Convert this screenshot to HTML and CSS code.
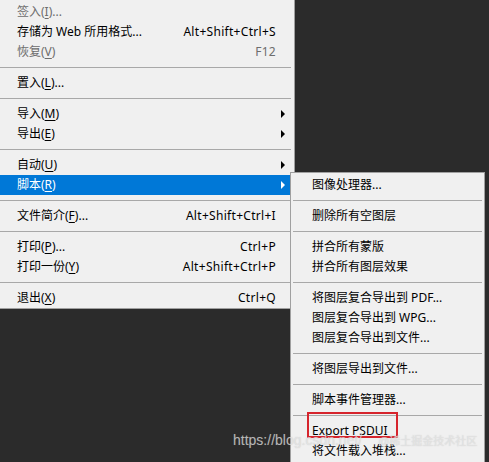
FILE: index.html
```html
<!DOCTYPE html>
<html lang="zh-CN">
<head>
<meta charset="utf-8">
<title>文件菜单</title>
<link rel="stylesheet" href="styles.css">
</head>
<body>
<div class="screen">
  <div class="menu main-menu">
    <div class="item disabled"><span class="label">签入(<u>I</u>)...</span></div>
    <div class="item"><span class="label">存储为 Web 所用格式...</span><span class="key">Alt+Shift+Ctrl+S</span></div>
    <div class="item disabled"><span class="label">恢复(<u>V</u>)</span><span class="key">F12</span></div>
    <div class="sep"></div>
    <div class="item"><span class="label">置入(<u>L</u>)...</span></div>
    <div class="sep"></div>
    <div class="item has-sub"><span class="label">导入(<u>M</u>)</span><span class="arrow"></span></div>
    <div class="item has-sub"><span class="label">导出(<u>E</u>)</span><span class="arrow"></span></div>
    <div class="sep"></div>
    <div class="item has-sub"><span class="label">自动(<u>U</u>)</span><span class="arrow"></span></div>
    <div class="item has-sub active"><span class="label">脚本(<u>R</u>)</span><span class="arrow"></span></div>
    <div class="sep"></div>
    <div class="item"><span class="label">文件简介(<u>F</u>)...</span><span class="key">Alt+Shift+Ctrl+I</span></div>
    <div class="sep"></div>
    <div class="item"><span class="label">打印(<u>P</u>)...</span><span class="key">Ctrl+P</span></div>
    <div class="item"><span class="label">打印一份(<u>Y</u>)</span><span class="key">Alt+Shift+Ctrl+P</span></div>
    <div class="sep"></div>
    <div class="item"><span class="label">退出(<u>X</u>)</span><span class="key">Ctrl+Q</span></div>
  </div>

  <div class="menu sub-menu">
    <div class="item"><span class="label">图像处理器...</span></div>
    <div class="sep"></div>
    <div class="item"><span class="label">删除所有空图层</span></div>
    <div class="sep"></div>
    <div class="item"><span class="label">拼合所有蒙版</span></div>
    <div class="item"><span class="label">拼合所有图层效果</span></div>
    <div class="sep"></div>
    <div class="item"><span class="label">将图层复合导出到 PDF...</span></div>
    <div class="item"><span class="label">图层复合导出到 WPG...</span></div>
    <div class="item"><span class="label">图层复合导出到文件...</span></div>
    <div class="sep"></div>
    <div class="item"><span class="label">将图层导出到文件...</span></div>
    <div class="sep"></div>
    <div class="item"><span class="label">脚本事件管理器...</span></div>
    <div class="sep"></div>
    <div class="item"><span class="label">Export PSDUI</span></div>
    <div class="item"><span class="label">将文件载入堆栈...</span></div>
  </div>

  <div class="mark-box"></div>
  <div class="watermark"><span class="wm-url">https://blog.csdn.net/</span><span class="wm-site">@稀土掘金技术社区</span></div>
</div>
</body>
</html>
```

FILE: styles.css
```css
* { box-sizing: border-box; }

html, body {
  margin: 0;
  padding: 0;
  background: #2b2b2b;
}

.screen {
  position: relative;
  width: 489px;
  height: 462px;
  overflow: hidden;
  font-family: "Noto Sans", "Noto Sans CJK SC", sans-serif;
  font-size: 12px;
  color: #000;
}

.menu {
  background: #f0f0f0;
}

.main-menu {
  width: 295px;
  padding-top: 2px;
  border-right: 1px solid #a0a0a0;
  border-bottom: 1px solid #a0a0a0;
}

.item {
  display: flex;
  align-items: center;
  height: 20px;
  padding: 0 18px 0 17px;
  white-space: nowrap;
  line-height: 20px;
}

.item .label { flex: 1; }

.item .key { letter-spacing: 0.3px; }

.item u { text-decoration: underline; text-underline-offset: 2px; }

.item.disabled { color: #6d6d6d; }

.item.has-sub { padding-right: 9px; }

.item.active {
  background: #0078d7;
  color: #fff;
}

.arrow {
  width: 0;
  height: 0;
  border-top: 4px solid transparent;
  border-bottom: 4px solid transparent;
  border-left: 4px solid #000;
}

.item.active .arrow { border-left-color: #fff; }

.sep {
  height: 11px;
  display: flex;
  align-items: center;
  padding: 0 3px 0 0;
}

.sep::before {
  content: "";
  display: block;
  flex: 1;
  height: 1px;
  background: #a8a8a8;
}

.sub-menu {
  position: absolute;
  left: 290px;
  top: 172px;
  width: 195px;
  height: 300px;
  border: 1px solid #a0a0a0;
  padding-top: 2px;
}

.sub-menu .item { padding-left: 21px; }

.sub-menu .sep { padding: 0 2px; }

.mark-box {
  position: absolute;
  left: 307px;
  top: 412px;
  width: 91px;
  height: 26px;
  border: 2px solid #d6242c;
}

.watermark {
  position: absolute;
  left: 233px;
  top: 432px;
  display: flex;
  align-items: baseline;
  gap: 16px;
  font-family: "Liberation Sans", "Noto Sans CJK SC", sans-serif;
  color: rgba(236, 236, 236, 0.7);
  text-shadow: 0 0 1px rgba(120, 120, 120, 0.35);
  white-space: nowrap;
}

.wm-url { font-size: 14px; }

.wm-site { font-size: 11px; }
```
